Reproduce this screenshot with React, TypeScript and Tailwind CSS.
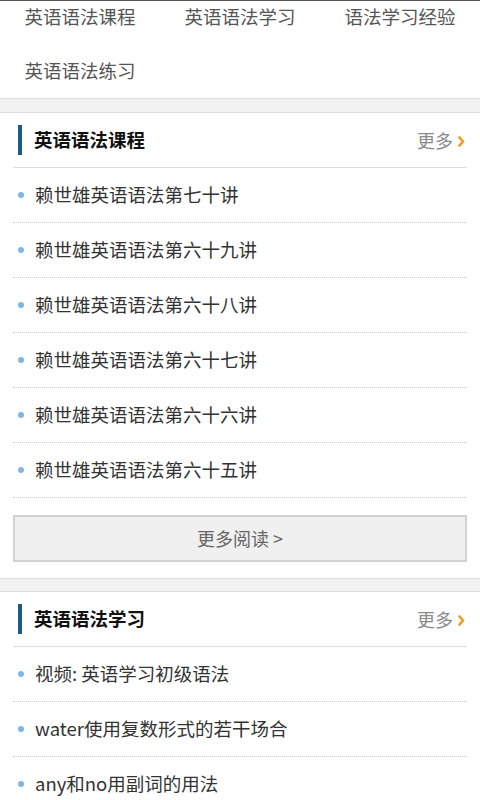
const navItems = ["英语语法课程", "英语语法学习", "语法学习经验", "英语语法练习"];

const sections = [
  {
    title: "英语语法课程",
    items: [
      "赖世雄英语语法第七十讲",
      "赖世雄英语语法第六十九讲",
      "赖世雄英语语法第六十八讲",
      "赖世雄英语语法第六十七讲",
      "赖世雄英语语法第六十六讲",
      "赖世雄英语语法第六十五讲",
    ],
  },
  {
    title: "英语语法学习",
    items: ["视频: 英语学习初级语法", "water使用复数形式的若干场合", "any和no用副词的用法"],
  },
];

const Section = ({ title, items }: { title: string; items: string[] }) => {
  return (
    <div className="bg-white border-t border-[#dcdcdc]">
      <div className="mx-[13px] h-[55px] flex items-center border-b border-[#dedede]">
        <div className="w-[4px] h-[30px] bg-[#1b5a8c] ml-[5px]" />
        <h2 className="ml-[12px] text-[18.5px] font-bold text-[#111] flex-1">{title}</h2>
        <span className="text-[18px] text-[#8a8a8a]">更多</span>
        <svg className="ml-[5px] mr-[2px] mt-[3px]" width="7" height="11" viewBox="0 0 7 11">
          <polyline
            points="1.5,1.5 5,5.5 1.5,9.5"
            fill="none"
            stroke="#f39a1c"
            strokeWidth="2.6"
            strokeLinecap="round"
            strokeLinejoin="round"
          />
        </svg>
      </div>
      <ul className="mx-[13px]">
        {items.map((item) => (
          <li
            key={item}
            className="h-[55px] flex items-center border-b border-dotted border-[#cfcfcf]"
          >
            <span className="ml-[5px] w-[6px] h-[6px] rounded-full bg-[#7fb6e2]" />
            <span className="ml-[11px] text-[18.5px] text-[#333]">{item}</span>
          </li>
        ))}
      </ul>
      {items.length > 3 && (
        <div className="mx-[13px] mt-[17px] mb-[16px] h-[47px] flex items-center justify-center bg-[#f0f0f0] border-2 border-[#d2d2d2] text-[18px] text-[#666]">
          更多阅读 &gt;
        </div>
      )}
    </div>
  );
};

const App = () => {
  return (
    <div
      className="h-[800px] w-[480px] overflow-hidden bg-white border-t border-[#555]"
      style={{ fontFamily: '"Noto Sans CJK SC", "Noto Sans", sans-serif' }}
    >
      <div className="-mt-[11px] grid grid-cols-3 border-b border-[#dcdcdc]">
        {navItems.map((n) => (
          <div key={n} className="h-[54px] flex items-center justify-center text-[18.5px] text-[#555]">
            {n}
          </div>
        ))}
      </div>
      <div className="h-[13px] bg-[#f2f2f2]" />
      <Section {...sections[0]} />
      <div className="h-[13px] bg-[#f2f2f2] border-t border-[#dcdcdc]" />
      <Section {...sections[1]} />
    </div>
  );
};

export default App;
